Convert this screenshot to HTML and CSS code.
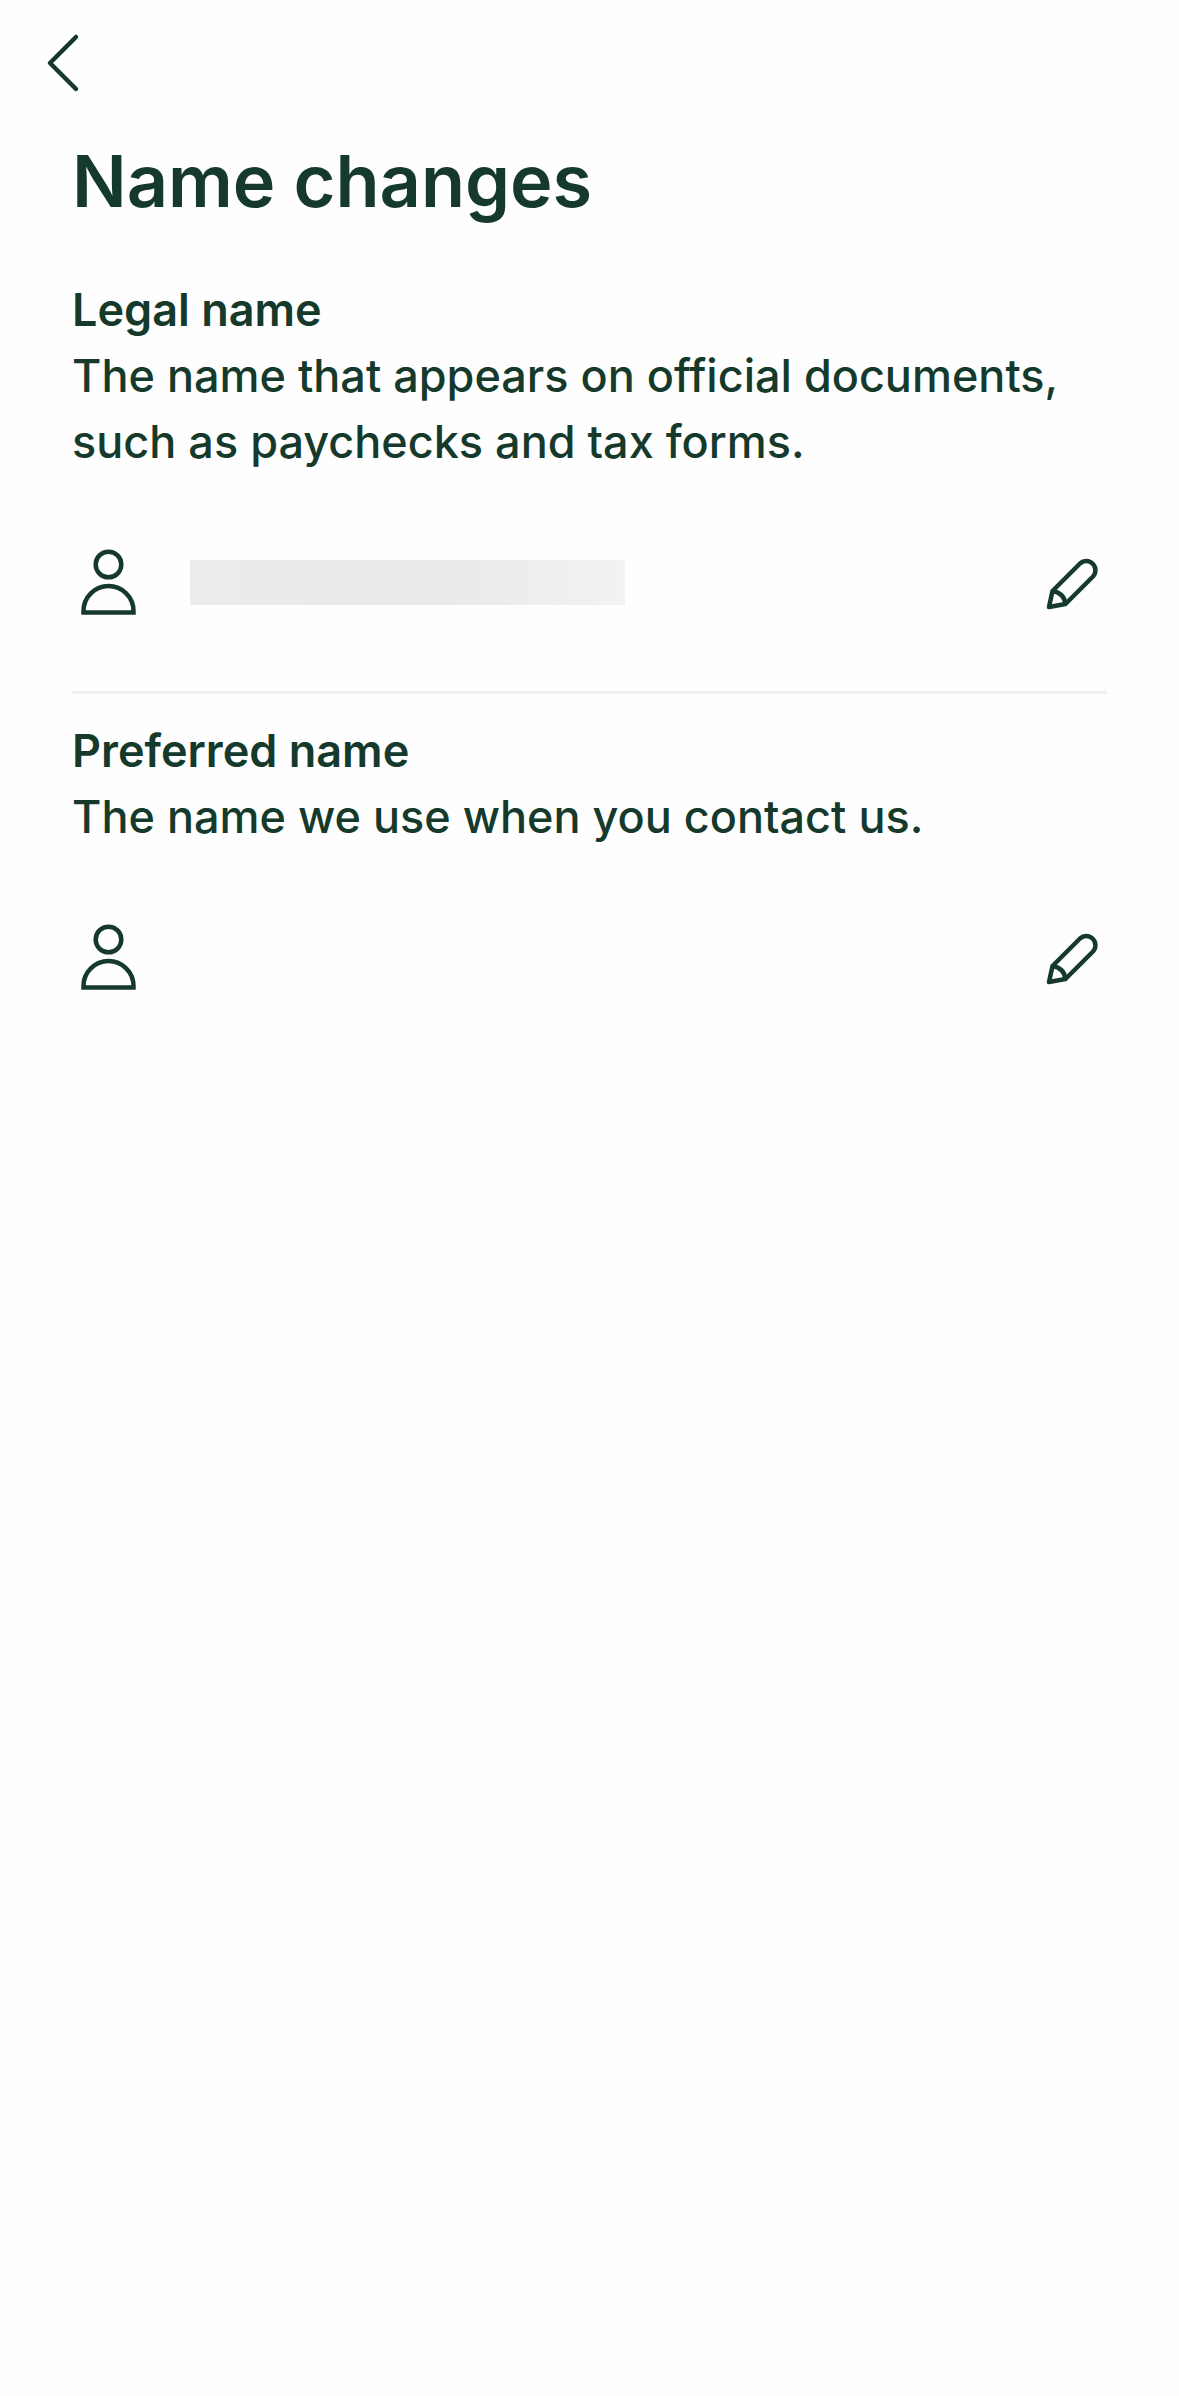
FILE: index.html
```html
<!DOCTYPE html>
<html lang="en">
<head>
    <meta charset="UTF-8">
    <meta name="viewport" content="width=device-width, initial-scale=1.0">
    <title>Name changes</title>
    <link rel="stylesheet" href="styles.css">
</head>
<body>
    <header class="top-bar">
        <button type="button" class="icon-btn" aria-label="Back">
            <svg class="icon" viewBox="0 0 72 72">
                <path d="M52 11 26 37 52 63" stroke-linecap="round" />
            </svg>
        </button>
    </header>

    <main class="content">
        <h1>Name changes</h1>

        <section class="name-section">
            <h2>Legal name</h2>
            <p>The name that appears on official documents, such as paychecks and tax forms.</p>
            <div class="name-row">
                <svg class="icon" viewBox="0 0 72 72" aria-hidden="true">
                    <circle cx="36.500" cy="18.500" r="12.800" />
                    <path d="M11.500 66.500V65a25 25 0 0 1 50 0V66.500Z" stroke-linejoin="miter" />
                </svg>
                <span class="name-value redacted"></span>
                <button type="button" class="icon-btn" aria-label="Edit legal name">
                    <svg class="icon" viewBox="0 0 72 72">
                        <path d="M14 61 17.500 45 45 17.500A9.200 9.200 0 0 1 58 30.500L30.500 58Z" />
                        <path d="M17.500 45Q29 47 30.500 58" />
                    </svg>
                </button>
            </div>
        </section>

        <section class="name-section">
            <h2>Preferred name</h2>
            <p>The name we use when you contact us.</p>
            <div class="name-row">
                <svg class="icon" viewBox="0 0 72 72" aria-hidden="true">
                    <circle cx="36.500" cy="18.500" r="12.800" />
                    <path d="M11.500 66.500V65a25 25 0 0 1 50 0V66.500Z" stroke-linejoin="miter" />
                </svg>
                <span class="name-value"></span>
                <button type="button" class="icon-btn" aria-label="Edit preferred name">
                    <svg class="icon" viewBox="0 0 72 72">
                        <path d="M14 61 17.500 45 45 17.500A9.200 9.200 0 0 1 58 30.500L30.500 58Z" />
                        <path d="M17.500 45Q29 47 30.500 58" />
                    </svg>
                </button>
            </div>
        </section>
    </main>
</body>
</html>
```
FILE: styles.css
```css
body {
    margin: 0;
    background-color: #fefefe;
    color: #153a2b;
    font-family: Inter, "Liberation Sans", sans-serif;
    font-size: 45px;
    font-weight: 500;
    line-height: 66px;
}

.top-bar {
    display: flex;
    padding: 26px 24px 31px;
}

.content {
    padding: 0 72px;
}

h1 {
    margin: 0 0 44px;
    font-size: 72px;
    font-weight: 600;
    line-height: 104px;
}

h2 {
    margin: 0;
    font-size: 45px;
    font-weight: 600;
}

p {
    margin: 0;
}

.name-section + .name-section {
    margin-top: 24px;
    border-top: 3px solid #efefef;
    padding-top: 24px;
}

.name-row {
    display: flex;
    align-items: center;
    padding: 71px 0 49px;
}

.icon {
    display: block;
    width: 72px;
    height: 72px;
    fill: none;
    stroke: #153a2b;
    stroke-width: 4.5px;
    stroke-linejoin: round;
}

.icon-btn {
    padding: 0;
    border: none;
    background: none;
    cursor: pointer;
}

.name-value {
    height: 45px;
    margin-left: 46px;
    margin-right: auto;
}

.redacted {
    width: 42%;
    background: linear-gradient(to right, #ebedec, #e8ebe9 30%, #e8ebe9 60%, #f0f3f2);
}
```
